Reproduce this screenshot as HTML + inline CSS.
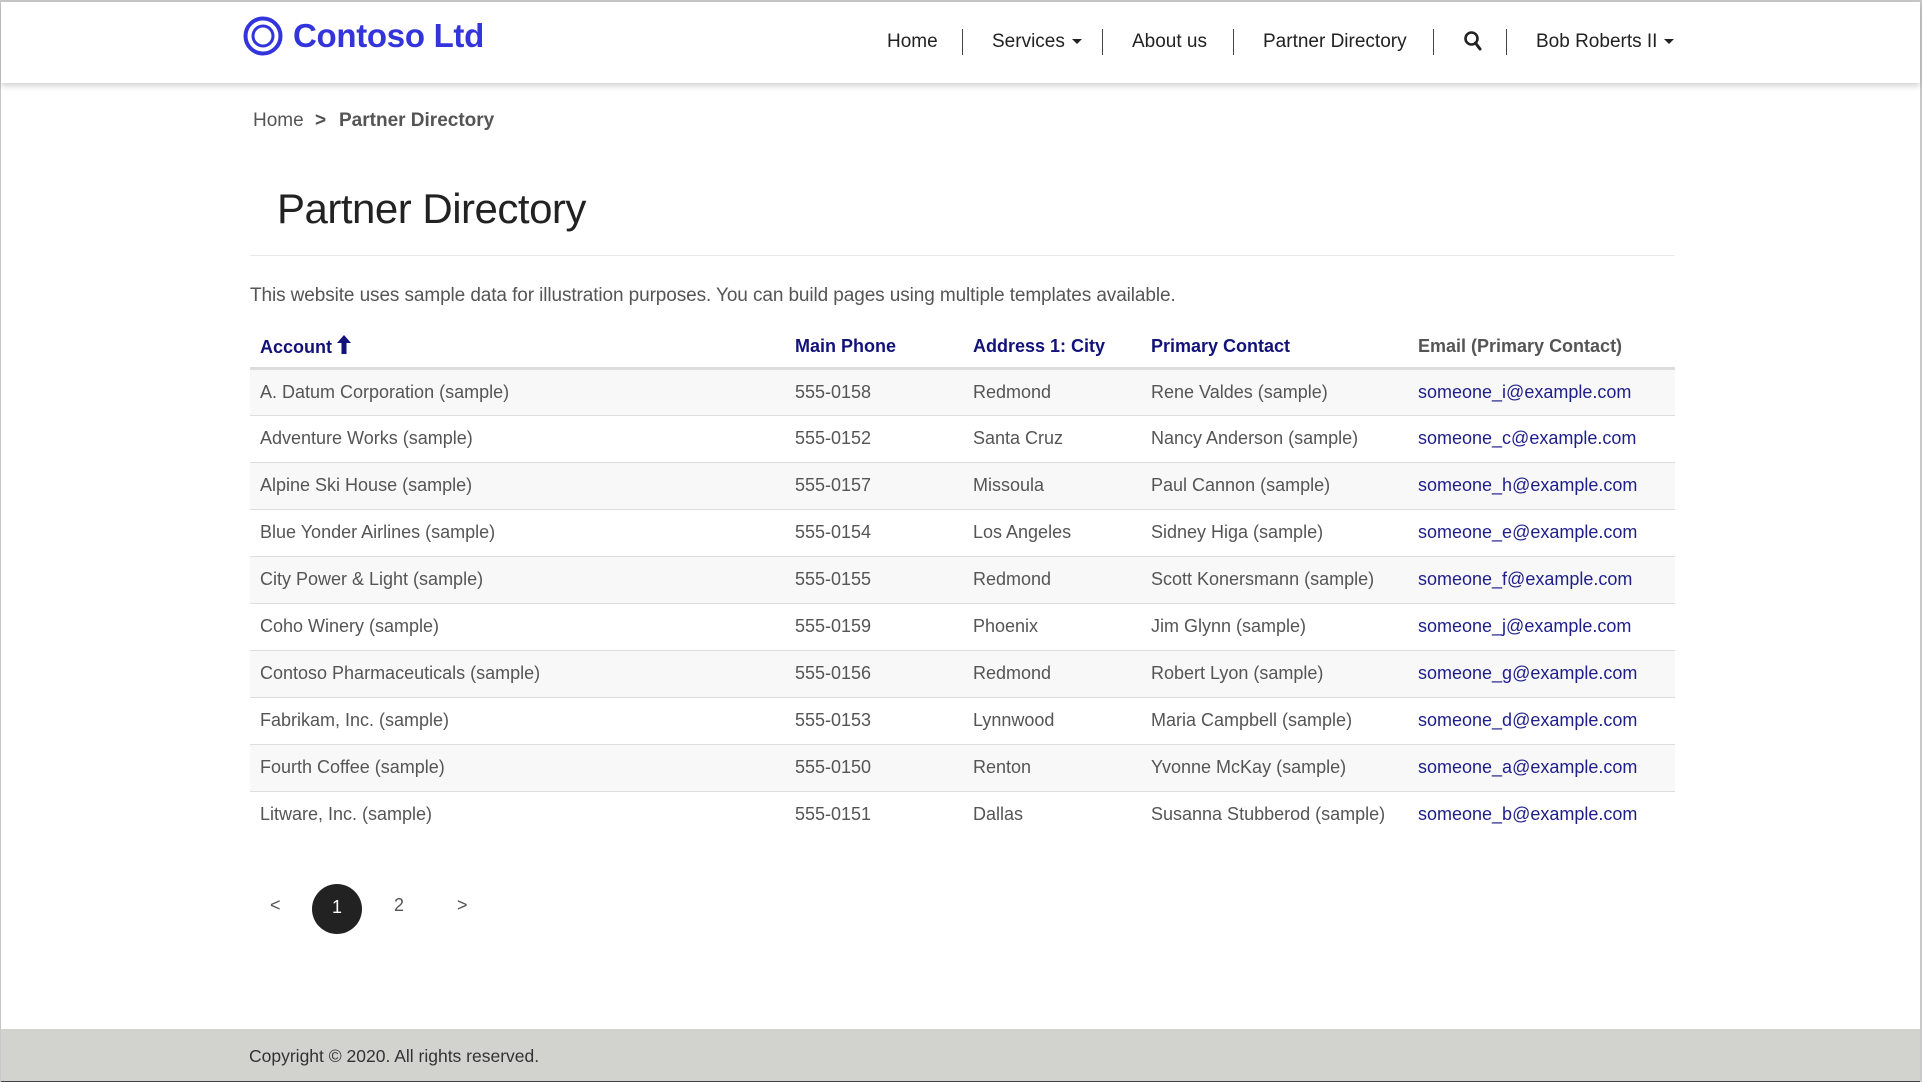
<!DOCTYPE html>
<html><head><meta charset="utf-8"><style>
*{margin:0;padding:0;box-sizing:border-box}
html,body{width:1922px;height:1082px;overflow:hidden;background:#fff;font-family:"Liberation Sans",sans-serif}
body{position:relative;border-left:1px solid #c8c8c8;border-right:2px solid #c8c8c8;border-top:2px solid #c8c8c8}
.hdr{position:absolute;left:0;top:0;width:100%;height:81px;background:#fff;box-shadow:0 3px 6px rgba(0,0,0,.18);z-index:2}
.logo{position:absolute;left:242px;top:13px;display:flex;align-items:center}
.logo span{font-size:33px;font-weight:bold;color:#3434dc;margin-left:10px;letter-spacing:-0.3px}
.nav{position:absolute;top:29px;font-size:19px;color:#222;white-space:nowrap}
.sep{position:absolute;top:27px;width:1px;height:26px;background:#444}
.caret{display:inline-block;width:0;height:0;border-left:5px solid transparent;border-right:5px solid transparent;border-top:5px solid #222;vertical-align:middle;margin-left:7px}
.abs{position:absolute;white-space:nowrap}
.bc{top:108px;font-size:19px;color:#555}
h1{position:absolute;left:276px;top:183px;font-size:42px;font-weight:normal;color:#222;letter-spacing:-0.5px;white-space:nowrap}
.hr{position:absolute;left:249px;top:253px;width:1425px;height:1px;background:#e8e8e8}
.p{left:249px;top:283px;font-size:19px;color:#555;letter-spacing:-0.1px}
table{position:absolute;left:249px;top:324px;width:1425px;border-collapse:collapse;font-size:18px}
th{text-align:left;color:#12127a;font-weight:bold;height:42px;padding:0;border-bottom:3px solid #ddd;vertical-align:middle}
td{height:47px;padding:0;color:#555;border-bottom:1px solid #ddd;vertical-align:middle}
tbody tr:last-child td{border-bottom:none}
tbody tr:nth-child(odd){background:#f8f8f8}
td a{color:#1e1e8a;text-decoration:none}
.c1{padding-left:10px;width:545px}.c2{width:178px}.c3{width:178px}.c4{width:267px}
.pg{top:893px;font-size:18px;color:#555}
.dot{position:absolute;left:311px;top:882px;width:50px;height:50px;border-radius:50%;background:#222;color:#fff;font-size:18px;text-align:center;line-height:46px}
.ft{position:absolute;left:0;top:1027px;width:100%;height:55px;background:#d2d2ce}
.ft span{position:absolute;left:248px;top:17px;font-size:17.5px;color:#333}
.ft i{position:absolute;left:0;bottom:0;width:100%;height:3px;background:#444}
</style></head><body>
<div class="hdr">
 <div class="logo"><svg width="40" height="42" viewBox="0 0 40 42"><circle cx="20" cy="21" r="17.5" fill="none" stroke="#3434dc" stroke-width="4"/><circle cx="20" cy="21" r="10" fill="none" stroke="#3434dc" stroke-width="3"/><path d="M9 13 Q16 5 29 9" fill="none" stroke="#fff" stroke-width="1.5"/></svg><span>Contoso Ltd</span></div>
 <div class="nav" style="left:886px">Home</div>
 <div class="sep" style="left:961px"></div>
 <div class="nav" style="left:991px">Services<span class="caret"></span></div>
 <div class="sep" style="left:1101px"></div>
 <div class="nav" style="left:1131px">About us</div>
 <div class="sep" style="left:1232px"></div>
 <div class="nav" style="left:1262px">Partner Directory</div>
 <div class="sep" style="left:1432px"></div>
 <svg class="abs" style="left:1462px;top:28px" width="20" height="22" viewBox="0 0 20 22"><circle cx="8.5" cy="8.5" r="6" fill="none" stroke="#222" stroke-width="2.6"/><path d="M12.5 13 L17 19" stroke="#222" stroke-width="3" stroke-linecap="round"/></svg>
 <div class="sep" style="left:1505px"></div>
 <div class="nav" style="left:1535px">Bob Roberts II<span class="caret"></span></div>
</div>
<div class="abs bc" style="left:252px">Home</div>
<div class="abs bc" style="left:314px;font-weight:bold">&gt;</div>
<div class="abs bc" style="left:338px;font-weight:bold">Partner Directory</div>
<h1>Partner Directory</h1>
<div class="hr"></div>
<div class="abs p">This website uses sample data for illustration purposes. You can build pages using multiple templates available.</div>
<table>
<thead><tr><th class="c1">Account <svg width="14" height="19" viewBox="0 0 14 19" style="vertical-align:-1px"><path d="M7 0 L14 8 H9.5 V19 H4.5 V8 H0 Z" fill="#12127a"/></svg></th><th class="c2">Main Phone</th><th class="c3">Address 1: City</th><th class="c4">Primary Contact</th><th style="color:#555">Email (Primary Contact)</th></tr></thead>
<tbody>
<tr><td class="c1">A. Datum Corporation (sample)</td><td>555-0158</td><td>Redmond</td><td>Rene Valdes (sample)</td><td><a>someone_i@example.com</a></td></tr>
<tr><td class="c1">Adventure Works (sample)</td><td>555-0152</td><td>Santa Cruz</td><td>Nancy Anderson (sample)</td><td><a>someone_c@example.com</a></td></tr>
<tr><td class="c1">Alpine Ski House (sample)</td><td>555-0157</td><td>Missoula</td><td>Paul Cannon (sample)</td><td><a>someone_h@example.com</a></td></tr>
<tr><td class="c1">Blue Yonder Airlines (sample)</td><td>555-0154</td><td>Los Angeles</td><td>Sidney Higa (sample)</td><td><a>someone_e@example.com</a></td></tr>
<tr><td class="c1">City Power &amp; Light (sample)</td><td>555-0155</td><td>Redmond</td><td>Scott Konersmann (sample)</td><td><a>someone_f@example.com</a></td></tr>
<tr><td class="c1">Coho Winery (sample)</td><td>555-0159</td><td>Phoenix</td><td>Jim Glynn (sample)</td><td><a>someone_j@example.com</a></td></tr>
<tr><td class="c1">Contoso Pharmaceuticals (sample)</td><td>555-0156</td><td>Redmond</td><td>Robert Lyon (sample)</td><td><a>someone_g@example.com</a></td></tr>
<tr><td class="c1">Fabrikam, Inc. (sample)</td><td>555-0153</td><td>Lynnwood</td><td>Maria Campbell (sample)</td><td><a>someone_d@example.com</a></td></tr>
<tr><td class="c1">Fourth Coffee (sample)</td><td>555-0150</td><td>Renton</td><td>Yvonne McKay (sample)</td><td><a>someone_a@example.com</a></td></tr>
<tr><td class="c1">Litware, Inc. (sample)</td><td>555-0151</td><td>Dallas</td><td>Susanna Stubberod (sample)</td><td><a>someone_b@example.com</a></td></tr>
</tbody></table>
<div class="abs pg" style="left:269px">&lt;</div>
<div class="dot">1</div>
<div class="abs pg" style="left:393px">2</div>
<div class="abs pg" style="left:456px">&gt;</div>
<div class="ft"><span>Copyright © 2020. All rights reserved.</span><i></i></div>
</body></html>
